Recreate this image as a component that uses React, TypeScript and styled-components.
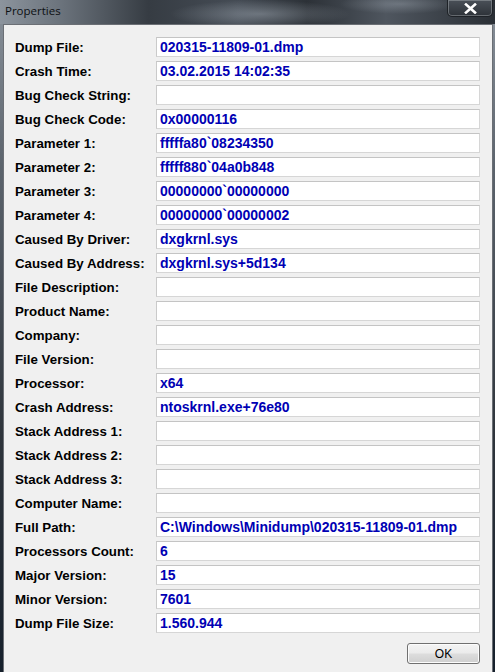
import styled, { createGlobalStyle } from "styled-components";

const GlobalStyle = createGlobalStyle`
  html, body {
    margin: 0;
    padding: 0;
    background: #1c2026;
  }
`;

type Field = { label: string; value?: string };

const fields: Field[] = [
  { label: "Dump File:", value: "020315-11809-01.dmp" },
  { label: "Crash Time:", value: "03.02.2015 14:02:35" },
  { label: "Bug Check String:" },
  { label: "Bug Check Code:", value: "0x00000116" },
  { label: "Parameter 1:", value: "fffffa80`08234350" },
  { label: "Parameter 2:", value: "fffff880`04a0b848" },
  { label: "Parameter 3:", value: "00000000`00000000" },
  { label: "Parameter 4:", value: "00000000`00000002" },
  { label: "Caused By Driver:", value: "dxgkrnl.sys" },
  { label: "Caused By Address:", value: "dxgkrnl.sys+5d134" },
  { label: "File Description:" },
  { label: "Product Name:" },
  { label: "Company:" },
  { label: "File Version:" },
  { label: "Processor:", value: "x64" },
  { label: "Crash Address:", value: "ntoskrnl.exe+76e80" },
  { label: "Stack Address 1:" },
  { label: "Stack Address 2:" },
  { label: "Stack Address 3:" },
  { label: "Computer Name:" },
  { label: "Full Path:", value: "C:\\Windows\\Minidump\\020315-11809-01.dmp" },
  { label: "Processors Count:", value: "6" },
  { label: "Major Version:", value: "15" },
  { label: "Minor Version:", value: "7601" },
  { label: "Dump File Size:", value: "1.560.944" },
];

function App(): JSX.Element {
  return (
    <>
      <GlobalStyle />
      <Window>
        <TitleBar>
          <Title>Properties</Title>
          <CloseButton>
            <svg width="13" height="11" viewBox="0 0 13 11">
              <path
                d="M2 1.5 L11 9.5 M11 1.5 L2 9.5"
                stroke="#ffffff"
                strokeWidth="2.6"
                strokeLinecap="square"
              />
            </svg>
          </CloseButton>
        </TitleBar>
        <Body>
          <FieldGrid>
            {fields.map((f) => (
              <Row key={f.label}>
                <Label>{f.label}</Label>
                <ValueBox>{f.value}</ValueBox>
              </Row>
            ))}
          </FieldGrid>
          <Footer>
            <OkButton>OK</OkButton>
          </Footer>
        </Body>
      </Window>
    </>
  );
}

export default App;

const Window = styled.div`
  width: 495px;
  height: 672px;
  display: flex;
  flex-direction: column;
  padding: 0 2px 0 3px;
  box-sizing: border-box;
  background: linear-gradient(
    to bottom,
    #8a929b 0%,
    #5b636c 25%,
    #2e343b 65%,
    #16202c 100%
  );
  overflow: hidden;
`;

const TitleBar = styled.div`
  height: 24px;
  flex: none;
  display: flex;
  justify-content: space-between;
  align-items: flex-start;
  margin: 0 -2px 0 -3px;
  padding: 0 2px 0 5px;
  background:
    radial-gradient(ellipse 90px 14px at 260px 14px, rgba(200, 210, 220, 0.35), transparent),
    radial-gradient(ellipse 60px 10px at 400px 4px, rgba(190, 200, 210, 0.3), transparent),
    linear-gradient(
      to right,
      #8c949d 0%,
      #6c747d 12%,
      #363c43 30%,
      #454c55 48%,
      #2c3137 62%,
      #4f565f 78%,
      #2a2f35 100%
    );
`;

const Title = styled.span`
  font-family: "Open Sans", "Noto Sans", sans-serif;
  font-size: 11.5px;
  line-height: 22px;
  color: #0c0f12;
`;

const CloseButton = styled.div`
  width: 46px;
  height: 17px;
  box-sizing: border-box;
  display: flex;
  align-items: center;
  justify-content: center;
  border: 1px solid #1e2227;
  border-top: none;
  border-radius: 0 0 5px 5px;
  background: linear-gradient(to bottom, #4a5058, #2d3238);
  box-shadow: inset 0 0 0 1px rgba(200, 205, 210, 0.35);
`;

const Body = styled.div`
  flex: 1;
  display: flex;
  flex-direction: column;
  background: #f0f0f0;
  border: 1px solid #6b6f75;
  border-bottom: none;
  padding: 12px 12px 0 11px;
`;

const FieldGrid = styled.div`
  display: flex;
  flex-direction: column;
  gap: 4px;
`;

const Row = styled.div`
  display: grid;
  grid-template-columns: 141px 324px;
  align-items: center;
  height: 20px;
`;

const Label = styled.span`
  font-family: "Liberation Sans", Arial, sans-serif;
  font-weight: 700;
  font-size: 13.3px;
  color: #000;
  white-space: nowrap;
`;

const ValueBox = styled.div`
  height: 20px;
  box-sizing: border-box;
  background: #ffffff;
  border: 1px solid #d6d6d6;
  border-top-color: #c4c4c4;
  border-left-color: #cacaca;
  padding-left: 3px;
  font-family: "Liberation Sans", Arial, sans-serif;
  font-weight: 700;
  font-size: 14px;
  line-height: 18px;
  color: #0000b4;
  white-space: nowrap;
  overflow: hidden;
`;

const Footer = styled.div`
  display: flex;
  justify-content: flex-end;
  margin-top: 10px;
`;

const OkButton = styled.button`
  width: 73px;
  height: 21px;
  padding: 0;
  border: 1px solid #707070;
  border-radius: 3px;
  background: linear-gradient(to bottom, #f4f4f4 0%, #ebebeb 48%, #dddddd 52%, #cfcfcf 100%);
  box-shadow: inset 0 0 0 1px #fcfcfc;
  font-family: "Liberation Sans", Arial, sans-serif;
  font-size: 12px;
  color: #000;
`;
